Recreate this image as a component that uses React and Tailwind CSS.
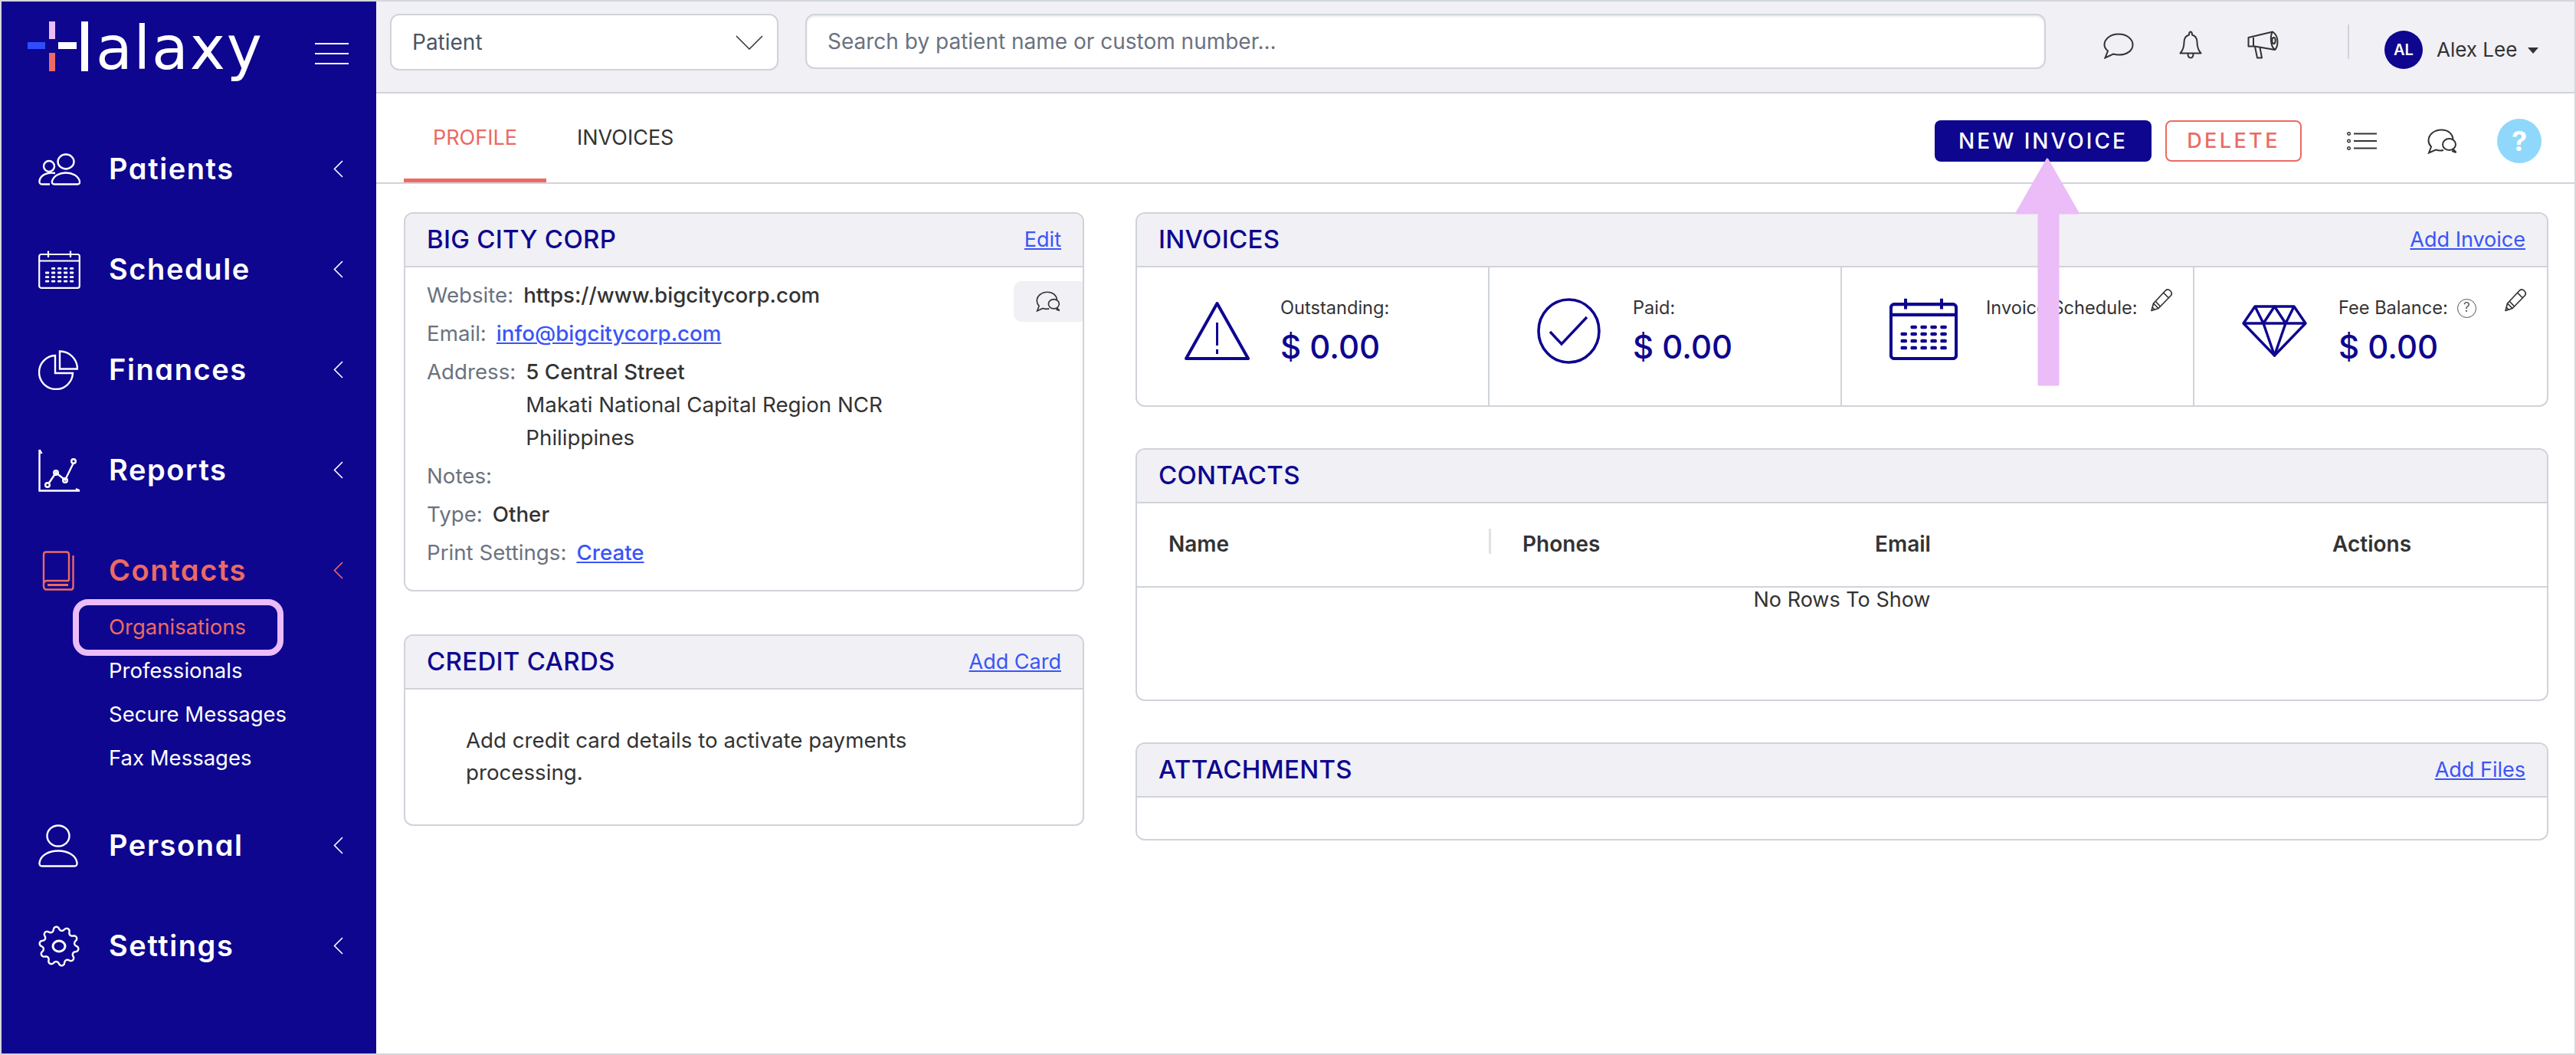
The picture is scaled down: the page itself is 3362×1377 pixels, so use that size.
const NAVY = "#0e068f";

const PatientsIcon = () => (
  <svg width="55" height="42" viewBox="0 0 55 42" fill="none" stroke="currentColor" strokeWidth="2.4">
    <ellipse cx="36" cy="11" rx="10.5" ry="9.5" />
    <circle cx="14" cy="17" r="7" />
    <path d="M21 40.5H51Q54.5 40.5 54 36.5C52 29 44 25.5 36 25.5C28 25.5 20 29 18 36.5Q17.5 40.5 21 40.5Z" />
    <path d="M22 26C12 24.5 3 28 1.5 36Q1 40.5 5 40.5H15" />
  </svg>
);

const CalendarIcon = ({ width, height, sw, color, className }) => {
  const rows = [0, 1, 2, 3];
  const cols = [0, 1, 2, 3, 4];
  return (
    <svg width={width} height={height} viewBox="0 0 55 50" fill="none" stroke={color} strokeWidth={sw} className={className}>
      <rect x="1.2" y="5" width="52.6" height="43.8" rx="2.5" />
      <path d="M1.2 13.5H53.8M13 0.5V9M42 0.5V9" />
      {rows.map((r) =>
        cols.map((c) =>
          r === 0 && c === 0 ? null : (
            <rect key={`${r}-${c}`} x={9 + c * 8} y={22 + r * 5.6} width="5.2" height="2.8" rx="1" fill={color} stroke="none" />
          )
        )
      )}
    </svg>
  );
};

const PieIcon = () => (
  <svg width="52" height="52" viewBox="0 0 52 52" fill="none" stroke="currentColor" strokeWidth="2.4">
    <path d="M22 7A22 22 0 1 0 45 30H22Z" />
    <path d="M28 1.5A23 23 0 0 1 51 24.5H28Z" />
  </svg>
);

const ReportsIcon = () => (
  <svg width="55" height="56" viewBox="0 0 55 56" fill="none" stroke="currentColor" strokeWidth="2.4">
    <path d="M1.5 1V54.5H54" />
    <path d="M1.5 1L4.5 6M54 54.5L49 52" />
    <path d="M13.5 45L23 31L35 40.5L46 18" />
    <circle cx="12" cy="47" r="2.8" />
    <circle cx="23" cy="31" r="2.8" />
    <circle cx="35" cy="41" r="2.8" />
    <circle cx="46" cy="16" r="2.8" />
  </svg>
);

const BookIcon = () => (
  <svg width="42" height="52" viewBox="0 0 42 52" fill="none" stroke="currentColor" strokeWidth="2.4">
    <path d="M35 39H6Q2 39 2 44M2 44V5Q2 1.5 5 1.5H32Q35 1.5 35 5V39" />
    <path d="M40.5 6V47Q40.5 50.5 38 50.5H6Q2 50.5 2 46V44" />
    <path d="M7 44.5H34" strokeWidth="3" />
  </svg>
);

const PersonIcon = () => (
  <svg width="52" height="56" viewBox="0 0 52 56" fill="none" stroke="currentColor" strokeWidth="2.4">
    <ellipse cx="26" cy="15" rx="14.5" ry="13.5" />
    <path d="M5 54.5H47Q51 54.5 50.5 50C49 40 38 34.5 26 34.5C14 34.5 3 40 1.5 50Q1 54.5 5 54.5Z" />
  </svg>
);

const gearPath = () => {
  const pts = [];
  for (let i = 0; i <= 180; i++) {
    const a = (i / 180) * Math.PI * 2;
    const r = 23 + 2.6 * Math.sign(Math.sin(10 * a)) * Math.pow(Math.abs(Math.sin(10 * a)), 0.6);
    pts.push(`${(27 + r * Math.cos(a)).toFixed(2)} ${(27 + r * Math.sin(a)).toFixed(2)}`);
  }
  return `M${pts.join("L")}Z`;
};

const GearIcon = () => (
  <svg width="54" height="54" viewBox="0 0 54 54" fill="none" stroke="currentColor" strokeWidth="2.4" strokeLinejoin="round">
    <path d={gearPath()} />
    <ellipse cx="27" cy="27" rx="8" ry="7" strokeWidth="3" />
  </svg>
);

const BubbleIcon = () => (
  <svg width="40" height="34" viewBox="0 0 40 34" fill="none" stroke="#333" strokeWidth="2">
    <path d="M20 1.5C31 1.5 38.5 8 38.5 15.5C38.5 23 31 28.5 20 28.5C17.5 28.5 15 28 13 27.5L2.5 32.5L6 23.5C3 21 1.5 18.5 1.5 15.5C1.5 8 9 1.5 20 1.5Z" />
  </svg>
);

const BellIcon = () => (
  <svg width="30" height="37" viewBox="0 0 30 37" fill="none" stroke="#333" strokeWidth="2" strokeLinejoin="round">
    <path d="M15 1.5C13.5 1.5 13 3 13 5.5C8 7 6.5 11 6.5 15C6.5 21 5.5 25 1.5 29.5H28.5C24.5 25 23.5 21 23.5 15C23.5 11 22 7 17 5.5C17 3 16.5 1.5 15 1.5Z" />
    <path d="M11.5 30C11.5 34 13 35.5 15 35.5C17 35.5 18.5 34 18.5 30" />
  </svg>
);

const MegaphoneIcon = () => (
  <svg width="41" height="37" viewBox="0 0 41 37" fill="none" stroke="#333" strokeWidth="2" strokeLinejoin="round">
    <path d="M1.5 9L33 1.5C37 4 39.5 9 39.5 14.5C39.5 19 38 23 36 25L10 20.5H1.5Z" />
    <path d="M8 9V20.5" />
    <path d="M33 1.5C30 5 29.5 20 36 25" />
    <ellipse cx="34.5" cy="13" rx="2.2" ry="4" />
    <path d="M10 21L13 35.5H19L16.5 22" />
  </svg>
);

const ListIcon = () => (
  <svg width="39" height="24" viewBox="0 0 39 24" fill="none" stroke="#333">
    <circle cx="2.5" cy="2.5" r="1.8" strokeWidth="1.4" />
    <circle cx="2.5" cy="12" r="1.8" strokeWidth="1.4" />
    <circle cx="2.5" cy="21.5" r="1.8" strokeWidth="1.4" />
    <path d="M9 2.5H39M9 12H39M9 21.5H39" strokeWidth="2.2" />
  </svg>
);

const DoubleChatIcon = ({ width, height }) => (
  <svg width={width} height={height} viewBox="0 0 39 33" fill="none" stroke="#333" strokeWidth="2">
    <path d="M33.5 14C33 6.5 27 1.5 18.5 1.5C9 1.5 1.5 7.5 1.5 15.5C1.5 19 3 21.5 5 23.5L2 31.5L11 27.5C14 28.5 18 28.8 21 28" />
    <ellipse cx="28.5" cy="20.5" rx="8.5" ry="7.5" />
    <path d="M33.5 26.5L37.5 31L32 29" />
  </svg>
);

const Pencil = ({ className }) => (
  <svg width="30" height="31" viewBox="0 0 30 31" fill="none" stroke="#333" strokeWidth="1.7" strokeLinejoin="round" className={className}>
    <path d="M2 29.5L4.5 20L20.5 3Q23.5 0.5 26.5 3.5Q29.5 6.5 27.5 9.5L11 26.5Z" />
    <path d="M4.5 20L11 26.5M7.5 17.5L13.5 24M17.5 6L24 12.5M3 25L6.5 28.5" />
  </svg>
);

const Chevron = () => (
  <svg width="13" height="23" viewBox="0 0 13 23" fill="none" stroke="currentColor" strokeWidth="1.6" className="shrink-0">
    <path d="M12 1L1.5 11.5L12 22" />
  </svg>
);

const navItems = [
  { label: "Patients", icon: <PatientsIcon /> },
  { label: "Schedule", icon: <CalendarIcon width={55} height={50} sw={2.2} color="currentColor" /> },
  { label: "Finances", icon: <PieIcon /> },
  { label: "Reports", icon: <ReportsIcon /> },
];

const NavRow = ({ label, icon, active }) => (
  <div className={`flex h-[131px] items-center pl-[48px] pr-[43px] ${active ? "text-[#ec6a63]" : "text-white"}`}>
    <div className="flex w-[92px] shrink-0 items-center">{icon}</div>
    <span className="flex-1 text-[38px] font-semibold tracking-[1.6px] [font-feature-settings:'cv11']">{label}</span>
    <Chevron />
  </div>
);

const Sidebar = () => (
  <aside className="flex w-[489px] shrink-0 flex-col bg-[#0e068f]">
    <div className="flex h-[153px] items-start pt-[25px] pl-[34px] pr-[36px] text-white">
      <svg width="80" height="66" viewBox="0 0 80 66" className="mt-px shrink-0">
        <rect x="0" y="27" width="23" height="9" fill="#2f4dff" />
        <rect x="28" y="0" width="8" height="23" fill="#ebbcf7" />
        <rect x="28" y="41" width="8" height="24" fill="#ec6a63" />
        <rect x="40" y="27" width="24" height="9" fill="#fff" />
        <rect x="70" y="0" width="9" height="65" fill="#fff" />
      </svg>
      <span className="ml-[9px] font-['DejaVu_Sans',sans-serif] text-[78px] leading-[72px] tracking-[1.8px]">alaxy</span>
      <div className="mt-[29px] ml-auto flex w-[44px] flex-col gap-[11px]">
        <div className="h-[2px] bg-white" />
        <div className="h-[2px] bg-white" />
        <div className="h-[2px] bg-white" />
      </div>
    </div>
    {navItems.map((n) => (
      <NavRow key={n.label} label={n.label} icon={n.icon} />
    ))}
    <NavRow label="Contacts" active icon={<div className="pl-[5px]"><BookIcon /></div>} />
    <div className="-mt-[20px] flex flex-col pl-[140px] text-[27.5px] leading-[57px] text-white">
      <div className="relative text-[#ec6a63]">
        Organisations
        <div className="absolute top-[-8px] left-[-47px] h-[74px] w-[275px] rounded-[20px] border-[8px] border-[#ebbcf7]" />
      </div>
      <div>Professionals</div>
      <div>Secure Messages</div>
      <div>Fax Messages</div>
    </div>
    <div className="mt-[20px]">
      <NavRow label="Personal" icon={<PersonIcon />} />
      <NavRow label="Settings" icon={<GearIcon />} />
    </div>
  </aside>
);

const TopBar = () => (
  <div className="flex h-[120px] shrink-0 items-start border-b-2 border-[#d0d3da] bg-[#f0f0f5] pl-[18px]">
    <div className="mt-[16px] flex h-[74px] w-[507px] items-center justify-between rounded-[12px] border-2 border-[#d0d3da] bg-white pr-[18px] pl-[27px] text-[28px] text-[#4b5563]">
      <span>Patient</span>
      <svg width="36" height="19" viewBox="0 0 36 19" fill="none" stroke="#333" strokeWidth="1.5">
        <path d="M1 1L18 18L35 1" />
      </svg>
    </div>
    <div className="mt-[16px] ml-[35px] flex h-[72px] w-[1619px] items-center rounded-[12px] border-2 border-[#d0d3da] bg-white pl-[27px] text-[28px] text-[#6b7280] shadow-[inset_0_2px_3px_rgba(0,0,0,0.08)]">
      Search by patient name or custom number...
    </div>
    <div className="mt-[41px] ml-[75px]"><BubbleIcon /></div>
    <div className="mt-[38px] ml-[59px]"><BellIcon /></div>
    <div className="mt-[38px] ml-[59px]"><MegaphoneIcon /></div>
    <div className="mt-[30px] ml-[90px] h-[45px] w-[2px] bg-[#d0d3da]" />
    <div className="mt-[38px] ml-[46px] flex h-[50px] w-[50px] items-center justify-center rounded-full bg-[#0e068f] text-[20px] font-semibold text-white">
      AL
    </div>
    <span className="mt-[44px] ml-[18px] text-[26px] leading-[38px] text-[#333]">Alex Lee</span>
    <div className="mt-[60px] ml-[14px] h-0 w-0 border-x-[7px] border-t-[8px] border-x-transparent border-t-[#333]" />
  </div>
);

const TabBar = () => (
  <div className="flex h-[118px] shrink-0 items-center justify-between border-b-2 border-[#d0d3da] pr-[43px] pl-[36px]">
    <div className="flex h-full items-stretch text-[27px]">
      <div className="flex items-center rounded-t-[2px] border-b-[5px] border-[#ec6a63] px-[38px] pt-[5px] text-[#ec6a63]">PROFILE</div>
      <div className="flex items-center px-[40px] text-[#333]">INVOICES</div>
    </div>
    <div className="flex items-center pt-[8px]">
      <div className="flex h-[54px] w-[283px] items-center justify-center rounded-[8px] bg-[#0e068f] text-[28px] font-medium tracking-[3px] text-white">
        NEW INVOICE
      </div>
      <div className="ml-[18px] flex h-[54px] w-[178px] items-center justify-center rounded-[8px] border-2 border-[#ec6a63] text-[27px] font-medium tracking-[3.4px] text-[#ec6a63]">
        DELETE
      </div>
      <div className="ml-[59px]"><ListIcon /></div>
      <div className="ml-[66px]"><DoubleChatIcon width={39} height={33} /></div>
      <div className="ml-[52px] flex h-[58px] w-[58px] items-center justify-center rounded-full bg-[#8fd8fb] text-[36px] font-bold text-white">?</div>
    </div>
  </div>
);

const Card = ({ title, link, children }) => (
  <div className="relative rounded-[12px] border-2 border-[#d0d3da] bg-white">
    <div className="flex h-[70px] items-center justify-between rounded-t-[10px] border-b-2 border-[#d0d3da] bg-[#f0f0f5] px-[28px]">
      <span className="text-[33px] font-medium tracking-[0.3px] text-[#0e068f]">{title}</span>
      {link && <a className="text-[27px] text-[#3a55f5] underline">{link}</a>}
    </div>
    {children}
  </div>
);

const InfoRow = ({ label, children }) => (
  <div className="flex h-[50px] items-center gap-[13px]">
    <span className="text-[#6b7280]">{label}</span>
    {children}
  </div>
);

const OrgCard = () => (
  <Card title="BIG CITY CORP" link="Edit">
    <div className="px-[28px] pt-[12px] pb-[23px] text-[27.7px] text-[#333]">
      <InfoRow label="Website:">
        <span className="font-medium">https://www.bigcitycorp.com</span>
      </InfoRow>
      <InfoRow label="Email:">
        <a className="font-medium text-[#3a55f5] underline">info@bigcitycorp.com</a>
      </InfoRow>
      <div className="flex items-start gap-[13px] pt-[3px] pb-[4px] leading-[43px]">
        <span className="text-[#6b7280]">Address:</span>
        <div>
          <div className="font-medium">5 Central Street</div>
          <div>Makati National Capital Region NCR</div>
          <div>Philippines</div>
        </div>
      </div>
      <InfoRow label="Notes:" />
      <InfoRow label="Type:">
        <span className="font-medium">Other</span>
      </InfoRow>
      <InfoRow label="Print Settings:">
        <a className="font-medium text-[#3a55f5] underline">Create</a>
      </InfoRow>
    </div>
    <div className="absolute top-[88px] right-0 flex h-[53px] w-[90px] items-center justify-center rounded-l-[10px] bg-[#f0f0f5]">
      <DoubleChatIcon width={32} height={27} />
    </div>
  </Card>
);

const CreditCard = () => (
  <Card title="CREDIT CARDS" link="Add Card">
    <div className="h-[176px] pt-[45px] pr-[120px] pl-[79px] text-[27.7px] leading-[42px] text-[#333]">
      Add credit card details to activate payments processing.
    </div>
  </Card>
);

const Stat = ({ icon, label, value, gap, help, edit, border }) => (
  <div className={`relative flex h-[180px] items-start pt-[36px] pl-[62px] ${border ? "border-r-2 border-[#d0d3da]" : ""}`}>
    {icon}
    <div className={gap}>
      <div className="flex h-[34px] items-center text-[23.6px] text-[#333]">
        {label}
        {help && (
          <span className="ml-[12px] flex h-[25px] w-[25px] items-center justify-center rounded-full border border-[#555] text-[17px] text-[#555]">?</span>
        )}
      </div>
      {value && <div className="mt-[9px] text-[42px] leading-[50px] font-medium text-[#0e068f]">{value}</div>}
    </div>
    {edit && <Pencil className="absolute top-[27px] right-[26px]" />}
  </div>
);

const InvoicesCard = () => (
  <Card title="INVOICES" link="Add Invoice">
    <div className="grid grid-cols-4">
      <Stat
        border
        label="Outstanding:"
        value="$ 0.00"
        gap="ml-[40px]"
        icon={
          <svg width="85" height="78" viewBox="0 0 85 78" fill="none" stroke={NAVY} strokeWidth="4" className="mt-[8px] shrink-0">
            <path d="M42.5 3L83 75H2Z" strokeLinejoin="round" />
            <path d="M42.5 28V58M42.5 63V69" strokeWidth="3" />
          </svg>
        }
      />
      <Stat
        border
        label="Paid:"
        value="$ 0.00"
        gap="ml-[42px]"
        icon={
          <svg width="83" height="86" viewBox="0 0 83 86" fill="none" stroke={NAVY} strokeWidth="3.6" className="mt-[4px] shrink-0">
            <ellipse cx="41.5" cy="43" rx="39.5" ry="41" />
            <path d="M17 44L32 60L65 25" strokeWidth="3.4" />
          </svg>
        }
      />
      <Stat
        border
        edit
        label="Invoice Schedule:"
        gap="ml-[37px]"
        icon={<CalendarIcon width={89} height={81} sw={2.5} color={NAVY} className="mt-[4px] shrink-0" />}
      />
      <Stat
        edit
        help
        label="Fee Balance:"
        value="$ 0.00"
        gap="ml-[41px]"
        icon={
          <svg width="85" height="68" viewBox="0 0 85 68" fill="none" stroke={NAVY} strokeWidth="3.4" strokeLinejoin="round" className="mt-[13px] shrink-0">
            <path d="M17 2H68L83 24L42.5 66L2 24Z" />
            <path d="M2 24H83M17 2L28 24L42.5 2L57 24L68 2M28 24L42.5 66L57 24" />
          </svg>
        }
      />
    </div>
  </Card>
);

const ContactsCard = () => (
  <Card title="CONTACTS">
    <div className="grid h-[110px] grid-cols-[459px_460px_597px_1fr] items-center border-b-2 border-[#d0d3da] pb-[3px] text-[28px] font-semibold text-[#333]">
      <div className="pl-[41px]">Name</div>
      <div className="relative pl-[44px]">
        Phones
        <div className="absolute top-[1px] left-0 h-[33px] w-[3px] bg-[#e0e1e6]" />
      </div>
      <div className="pl-[44px]">Email</div>
      <div className="pl-[44px]">Actions</div>
    </div>
    <div className="h-[146px] text-center text-[27px] leading-[32px] text-[#333]">No Rows To Show</div>
  </Card>
);

const AttachmentsCard = () => (
  <Card title="ATTACHMENTS" link="Add Files">
    <div className="h-[54px]" />
  </Card>
);

export default function App() {
  return (
    <div className="relative flex h-[1377px] w-[3362px] overflow-hidden border-2 border-[#d4d6db] bg-white font-[Inter,sans-serif]">
      <Sidebar />
      <main className="flex min-w-0 flex-1 flex-col">
        <TopBar />
        <TabBar />
        <div className="flex items-start gap-[67px] pt-[37px] pr-[34px] pl-[36px]">
          <div className="flex w-[888px] shrink-0 flex-col gap-[56px]">
            <OrgCard />
            <CreditCard />
          </div>
          <div className="flex min-w-0 flex-1 flex-col gap-[54px]">
            <InvoicesCard />
            <ContactsCard />
            <AttachmentsCard />
          </div>
        </div>
      </main>
      <svg width="84" height="300" viewBox="0 0 84 300" className="absolute top-[204px] left-[2628px]" fill="#ebbcf7" stroke="#ebbcf7" strokeWidth="3" strokeLinejoin="round">
        <path d="M42 2L82 72H56V296H31V72H2Z" />
      </svg>
    </div>
  );
}
